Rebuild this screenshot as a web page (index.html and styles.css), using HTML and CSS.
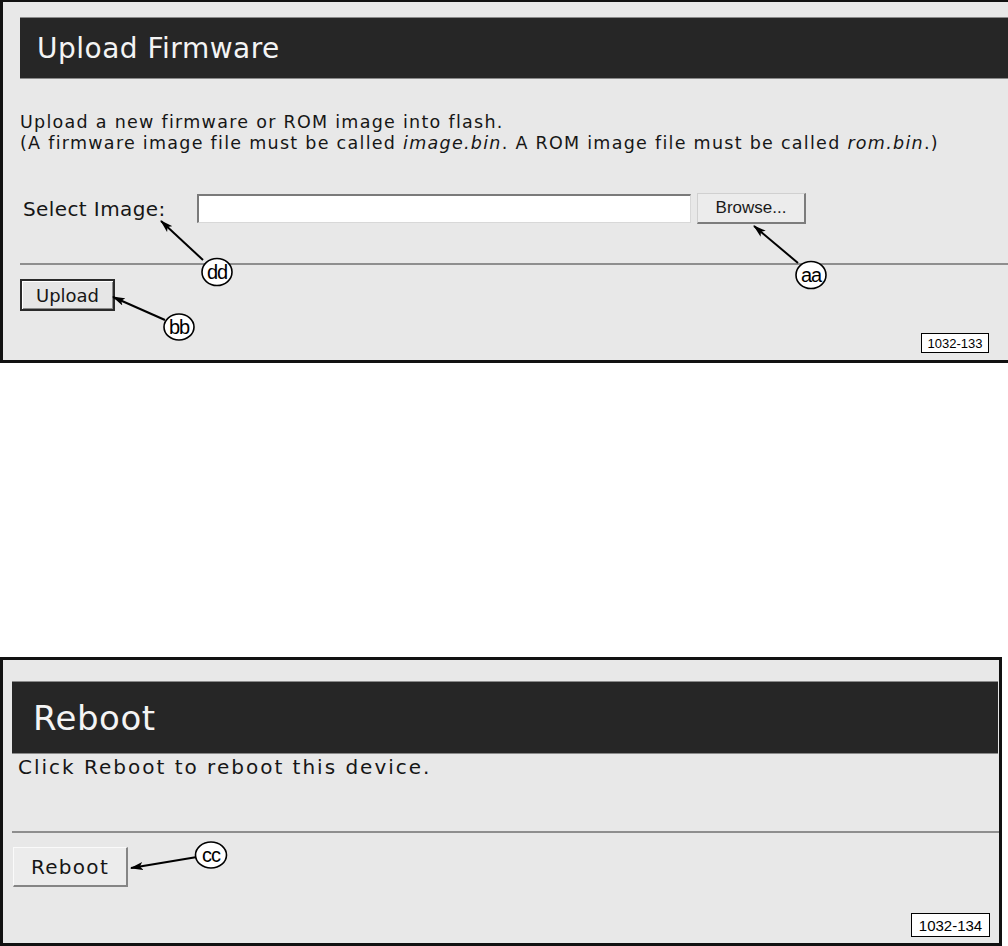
FILE: index.html
```html
<!DOCTYPE html>
<html lang="en">
<head>
<meta charset="utf-8">
<title>Upload Firmware / Reboot</title>
<link rel="stylesheet" href="styles.css">
</head>
<body>
<div class="page">
  <section class="panel panel-upload">
    <div class="title-bar up-title">Upload Firmware</div>
    <div class="up-desc">
      <p>Upload a new firmware or ROM image into flash.</p>
      <p>(A firmware image file must be called <em>image.bin</em>. A ROM image file must be called <em>rom.bin</em>.)</p>
    </div>
    <div class="select-row">
      <span class="select-label">Select Image:</span>
      <span class="file-input"></span>
      <button class="browse-btn" type="button">Browse...</button>
    </div>
    <div class="rule up-rule"></div>
    <button class="upload-btn" type="button">Upload</button>
    <div class="fig-row up-fig-row"><span class="fig-label up-fig">1032-133</span></div>
    <svg class="callouts up-callouts" viewBox="0 0 1008 364" width="1008" height="364" aria-hidden="true">
      <defs>
        <marker id="ah1" markerWidth="13" markerHeight="8" refX="12" refY="4" orient="auto" markerUnits="userSpaceOnUse">
          <path d="M0,0 L13,4 L0,8 L3,4 z" fill="#000"/>
        </marker>
      </defs>
      <line x1="203" y1="260" x2="161" y2="221" stroke="#000" stroke-width="2" marker-end="url(#ah1)"/>
      <line x1="798" y1="263" x2="754" y2="226" stroke="#000" stroke-width="2" marker-end="url(#ah1)"/>
      <line x1="165" y1="320" x2="113" y2="297" stroke="#000" stroke-width="2" marker-end="url(#ah1)"/>
      <ellipse cx="217" cy="272" rx="15" ry="13.5" fill="#fff" stroke="#000" stroke-width="1.6"/>
      <text x="217" y="279" class="callout-text">dd</text>
      <ellipse cx="811" cy="275" rx="15" ry="13.5" fill="#fff" stroke="#000" stroke-width="1.6"/>
      <text x="811" y="282" class="callout-text">aa</text>
      <ellipse cx="179" cy="327" rx="15" ry="13" fill="#fff" stroke="#000" stroke-width="1.6"/>
      <text x="179" y="334" class="callout-text">bb</text>
    </svg>
  </section>

  <section class="panel panel-reboot">
    <div class="title-bar rb-title">Reboot</div>
    <div class="rb-desc">Click Reboot to reboot this device.</div>
    <div class="rule rb-rule"></div>
    <button class="reboot-btn" type="button">Reboot</button>
    <div class="fig-row rb-fig-row"><span class="fig-label rb-fig">1032-134</span></div>
    <svg class="callouts rb-callouts" viewBox="0 657 1002 289" width="1002" height="289" aria-hidden="true">
      <defs>
        <marker id="ah2" markerWidth="13" markerHeight="8" refX="12" refY="4" orient="auto" markerUnits="userSpaceOnUse">
          <path d="M0,0 L13,4 L0,8 L3,4 z" fill="#000"/>
        </marker>
      </defs>
      <line x1="197" y1="857" x2="131" y2="868" stroke="#000" stroke-width="2" marker-end="url(#ah2)"/>
      <ellipse cx="211" cy="855" rx="15.5" ry="13" fill="#fff" stroke="#000" stroke-width="1.6"/>
      <text x="211" y="862" class="callout-text">cc</text>
    </svg>
  </section>
</div>
</body>
</html>
```

FILE: styles.css
```css
html, body {
  margin: 0;
  padding: 0;
  background: #ffffff;
}

body {
  font-family: "DejaVu Sans", Verdana, sans-serif;
  color: #161616;
}

.page {
  width: 1008px;
}

.panel {
  position: relative;
  background: #e8e8e8;
}

.title-bar {
  display: flex;
  align-items: center;
  box-sizing: border-box;
  background: #262626;
  border-top: 1px solid #8a8a8a;
  border-bottom: 1px solid #8a8a8a;
  color: #f4f4f4;
}

/* ---------- Upload Firmware panel ---------- */
.panel-upload {
  border-top: 2px solid #111;
  border-left: 3px solid #111;
  border-bottom: 3px solid #111;
  padding-bottom: 7px;
}

.up-title {
  margin: 15px 0 0 17px;
  height: 62px;
  padding-left: 17px;
  font-size: 28px;
  letter-spacing: 0.5px;
}

.up-desc {
  margin: 33px 0 0 17px;
  font-size: 17.5px;
  line-height: 20.5px;
  letter-spacing: 1.28px;
}

.up-desc p {
  margin: 0;
}

.select-row {
  display: flex;
  align-items: center;
  height: 31px;
  margin: 40px 0 0 20px;
}

.select-label {
  width: 174px;
  font-size: 20px;
  line-height: 24px;
  letter-spacing: 0.4px;
}

.file-input {
  display: block;
  width: 494px;
  height: 29px;
  box-sizing: border-box;
  background: #ffffff;
  border-top: 2px solid #7a7a7a;
  border-left: 2px solid #7a7a7a;
  border-right: 1px solid #d8d8d8;
  border-bottom: 1px solid #d8d8d8;
}

.browse-btn {
  margin: 0 0 0 6px;
  width: 109px;
  height: 31px;
  padding: 0;
  box-sizing: border-box;
  background: #ececec;
  border-top: 1px solid #d0d0d0;
  border-left: 1px solid #d0d0d0;
  border-right: 2px solid #7c7c7c;
  border-bottom: 2px solid #7c7c7c;
  font-family: "Liberation Sans", Arial, sans-serif;
  font-size: 17px;
  color: #1a1a1a;
}

.rule {
  height: 0;
  border-top: 2px solid #8e8e8e;
}

.up-rule {
  margin: 39px 0 0 17px;
}

.upload-btn {
  display: block;
  margin: 14px 0 0 17px;
  width: 95px;
  height: 32px;
  padding: 0;
  box-sizing: border-box;
  background: #e6e6e6;
  border: 2px solid #2a2a2a;
  box-shadow: inset 1px 1px 0 #ffffff, inset -1px -1px 0 #8a8a8a;
  font-family: "DejaVu Sans", Verdana, sans-serif;
  font-size: 18px;
  color: #161616;
}

.fig-row {
  display: flex;
  justify-content: flex-end;
}

.fig-label {
  display: flex;
  align-items: center;
  justify-content: center;
  box-sizing: border-box;
  background: #ffffff;
  border: 1px solid #000;
  font-family: "Liberation Sans", Arial, sans-serif;
  color: #000;
}

.up-fig-row {
  margin-top: 22px;
  padding-right: 19px;
}

.up-fig {
  width: 68px;
  height: 20px;
  font-size: 13px;
}

.callouts {
  position: absolute;
  pointer-events: none;
}

.up-callouts {
  left: -3px;
  top: -2px;
}

.callout-text {
  font-family: "Liberation Sans", Arial, sans-serif;
  font-size: 20px;
  letter-spacing: -1px;
  text-anchor: middle;
  fill: #000;
}

/* ---------- Reboot panel ---------- */
.panel-reboot {
  width: 1002px;
  box-sizing: border-box;
  margin-top: 294px;
  border: 3px solid #111;
  padding-bottom: 6px;
}

.rb-title {
  margin: 21px 1px 0 9px;
  height: 73px;
  padding-left: 21px;
  font-size: 34px;
  letter-spacing: 0.5px;
}

.rb-desc {
  margin: 1px 0 0 15px;
  font-size: 20px;
  line-height: 24px;
  letter-spacing: 2px;
}

.rb-rule {
  margin: 52px 0 0 9px;
}

.reboot-btn {
  display: block;
  margin: 14px 0 0 10px;
  width: 115px;
  height: 40px;
  padding: 0;
  box-sizing: border-box;
  background: #ececec;
  border-top: 1px solid #fafafa;
  border-left: 1px solid #fafafa;
  border-right: 2px solid #858585;
  border-bottom: 2px solid #858585;
  font-family: "DejaVu Sans", Verdana, sans-serif;
  font-size: 20px;
  letter-spacing: 1.3px;
  color: #161616;
}

.rb-fig-row {
  margin-top: 26px;
  padding-right: 9px;
}

.rb-fig {
  width: 79px;
  height: 24px;
  font-size: 15px;
}

.rb-callouts {
  left: -3px;
  top: -3px;
}
```
